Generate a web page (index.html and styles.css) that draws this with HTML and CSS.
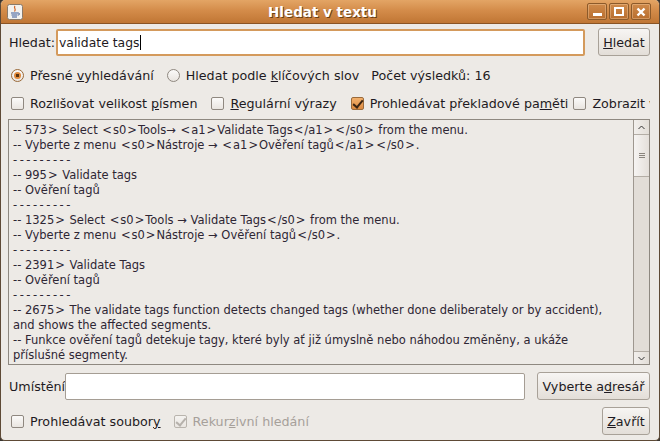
FILE: index.html
```html
<!DOCTYPE html>
<html>
<head>
<meta charset="utf-8">
<link rel="stylesheet" href="styles.css">
</head>
<body>
<div class="window">
  <div class="titlebar">
    <div class="appicon">
      <svg width="16" height="16" viewBox="0 0 16 16">
        <rect x="0.5" y="0.5" width="15" height="15" rx="2" fill="#f3f1ee" stroke="#8a7a6a"/>
        <path d="M8 2 C6 4 10 5 7.5 7.5" stroke="#d06020" stroke-width="1.2" fill="none"/>
        <path d="M4 9 h7 M4.5 11 h6 M5 13 h5" stroke="#3a5a9a" stroke-width="1.1"/>
        <path d="M11 9 c2 0 2 2 0 2" stroke="#3a5a9a" stroke-width="1" fill="none"/>
      </svg>
    </div>
    <div class="title">Hledat v textu</div>
    <div class="wbtns">
      <div class="wbtn"><span class="minbar"></span></div>
      <div class="wbtn"><span class="maxbox"></span></div>
      <div class="wbtn">
        <svg width="10" height="10" viewBox="0 0 10 10"><path d="M1.5 1.5 L8.5 8.5 M8.5 1.5 L1.5 8.5" stroke="#fff" stroke-width="2.4"/></svg>
      </div>
    </div>
  </div>
  <div class="content">
    <div class="row search">
      <span class="lbl">Hledat:</span>
      <div class="input focus">validate tags<span class="caret"></span></div>
      <button class="btn btn-search"><u>H</u>ledat</button>
    </div>
    <div class="row opts">
      <span class="radio on"></span><span class="opt">Přesné <u>v</u>yhledávání</span>
      <span class="radio r2"></span><span class="opt">Hledat podle <u>k</u>líčových slov</span>
      <span class="opt count">Počet výsledků: 16</span>
    </div>
    <div class="row opts opts2">
      <span class="check"></span><span class="opt">Rozlišovat velikost <u>p</u>ísmen</span>
      <span class="check c2"></span><span class="opt"><u>R</u>egulární výrazy</span>
      <span class="check on c3"></span><span class="opt">Prohledávat překladové pa<u>m</u>ěti</span>
      <span class="check c4"></span><span class="opt clip">Zobrazit v</span>
    </div>
    <div class="results">
      <div class="text">
        <div>-- 573<i>&gt;</i> Select <i>&lt;</i>s0<i>&gt;</i>Tools→ <i>&lt;</i>a1<i>&gt;</i>Validate Tags<i>&lt;</i>/a1<i>&gt;</i><i>&lt;</i>/s0<i>&gt;</i> from the menu.</div>
        <div>-- Vyberte z menu <i>&lt;</i>s0<i>&gt;</i>Nástroje → <i>&lt;</i>a1<i>&gt;</i>Ověření tagů<i>&lt;</i>/a1<i>&gt;</i><i>&lt;</i>/s0<i>&gt;</i>.</div>
        <div class="sep">---------</div>
        <div>-- 995<i>&gt;</i> Validate tags</div>
        <div>-- Ověření tagů</div>
        <div class="sep">---------</div>
        <div>-- 1325<i>&gt;</i> Select <i>&lt;</i>s0<i>&gt;</i>Tools → Validate Tags<i>&lt;</i>/s0<i>&gt;</i> from the menu.</div>
        <div>-- Vyberte z menu <i>&lt;</i>s0<i>&gt;</i>Nástroje → Ověření tagů<i>&lt;</i>/s0<i>&gt;</i>.</div>
        <div class="sep">---------</div>
        <div>-- 2391<i>&gt;</i> Validate Tags</div>
        <div>-- Ověření tagů</div>
        <div class="sep">---------</div>
        <div>-- 2675<i>&gt;</i> The validate tags function detects changed tags (whether done deliberately or by accident),</div>
        <div>and shows the affected segments.</div>
        <div>-- Funkce ověření tagů detekuje tagy, které byly ať již úmyslně nebo náhodou změněny, a ukáže</div>
        <div>příslušné segmenty.</div>
      </div>
      <div class="scrollbar">
        <div class="sbtn">
          <svg width="7" height="5" viewBox="0 0 7 5"><path d="M0.5 4 L3.5 1 L6.5 4" stroke="#333" stroke-width="1" fill="none"/></svg>
        </div>
        <div class="thumb"><span class="grip"></span></div>
        <div class="trough"></div>
        <div class="sbtn">
          <svg width="7" height="5" viewBox="0 0 7 5"><path d="M0.5 1 L3.5 4 L6.5 1" stroke="#333" stroke-width="1" fill="none"/></svg>
        </div>
      </div>
    </div>
    <div class="row loc">
      <span class="lbl">Umístění</span>
      <div class="input"></div>
      <button class="btn btn-dir">Vyberte a<u>d</u>resář</button>
    </div>
    <div class="row last">
      <span class="check"></span><span class="opt">Prohledávat soubor<u>y</u></span>
      <span class="check dis c5"></span><span class="opt disabled">Rekur<u>z</u>ivní hledání</span>
      <button class="btn btn-close"><u>Z</u>avřít</button>
    </div>
  </div>
</div>
</body>
</html>
```

FILE: styles.css
```css
* { box-sizing: border-box; }
html, body { margin: 0; padding: 0; background: #3a3530; }
body { width: 660px; height: 441px; overflow: hidden; }

.window {
  width: 660px;
  height: 441px;
  background: #edeae6;
  border: 1px solid #5e4a36;
  border-top: none;
  border-radius: 5px 5px 5px 5px;
  overflow: hidden;
  display: flex;
  flex-direction: column;
  font-family: "DejaVu Sans", sans-serif;
  font-size: 12.7px;
  color: #1e1a22;
}

.titlebar {
  height: 24px;
  flex: none;
  background: linear-gradient(#e3a565 0%, #d48c4a 45%, #c07634 100%);
  border-bottom: 1px solid #8a5424;
  display: flex;
  align-items: center;
  position: relative;
  padding: 0 8px 0 6px;
}
.appicon { width: 16px; height: 16px; display: flex; }
.title {
  flex: 1;
  text-align: center;
  color: #fff;
  font-weight: bold;
  font-size: 13.5px;
  text-shadow: 1px 1px 0 #6a3e14;
  padding-left: 35px;
}
.wbtns { display: flex; gap: 2px; }
.wbtn {
  width: 20px;
  height: 17px;
  border: 1px solid #8c5a2a;
  border-radius: 2px;
  background: linear-gradient(#cf8a4a, #b96e2e);
  box-shadow: inset 0 0 0 1px rgba(255,220,180,0.35);
  display: flex;
  align-items: center;
  justify-content: center;
}
.minbar { width: 9px; height: 3px; background: #fff; margin-top: 6px; }
.maxbox { width: 10px; height: 9px; border: 2px solid #fff; }

.content {
  flex: 1;
  display: flex;
  flex-direction: column;
  padding: 4px 9px 0 7px;
}

.row { display: flex; align-items: center; }
.lbl { white-space: nowrap; }

.input {
  flex: 1;
  height: 27px;
  background: #fff;
  border: 1px solid #a59d94;
  border-radius: 2px;
  display: flex;
  align-items: center;
  padding-left: 3px;
  font-size: 12.4px;
}
.input.focus { border: 2px solid #d49a5c; padding-left: 1px; }
.caret { width: 1px; height: 15px; background: #000; margin-left: 1px; }

.btn {
  font-family: "DejaVu Sans", sans-serif;
  font-size: 12.7px;
  color: #1e1a22;
  height: 28px;
  border: 1px solid #a8a198;
  border-radius: 3px;
  background: linear-gradient(#f7f5f3, #e3ded8);
  padding: 0 4px;
  white-space: nowrap;
}
.search .lbl { margin-left: 1px; width: 47px; }
.btn-search { margin-left: 13px; width: 52px; }

.opts { height: 28px; margin-top: 5px; }
.opts2 { margin-top: 0; white-space: nowrap; overflow: hidden; }
.opt { white-space: nowrap; }
.radio, .check {
  flex: none;
  width: 13px;
  height: 13px;
  border: 1px solid #8f8880;
  background: linear-gradient(#fbfaf9, #e9e5e0);
  margin-left: 3px;
  margin-right: 6px;
}
.radio { border-radius: 50%; position: relative; }
.radio.on { border-color: #9a6a3a; }
.radio.on::after {
  content: "";
  position: absolute;
  left: 2px; top: 2px;
  width: 7px; height: 7px;
  border-radius: 50%;
  background: radial-gradient(circle, #5a3210 0 1.5px, #e08a3c 2px);
}
.r2 { margin-left: 13px; }
.count { margin-left: 12px; }
.check { border-radius: 2px; position: relative; }
.check.on { border-color: #9a6a3a; background: linear-gradient(#f2b06c, #dc8a40); }
.check.on::after {
  content: "";
  position: absolute;
  left: 3px; top: 0px;
  width: 4px; height: 8px;
  border: solid #3a2412;
  border-width: 0 2px 2px 0;
  transform: rotate(40deg);
}
.c2 { margin-left: 14px; }
.c3 { margin-left: 14px; }
.c4 { margin-left: 5px; }
.opts2 .opt.clip { overflow: hidden; }

.results {
  height: 246px;
  margin-top: 2px;
  border: 1px solid #8e8880;
  display: flex;
  background: #edeae6;
}
.text {
  flex: 1;
  padding: 3px 0 0 4px;
  font-family: "DejaVu Sans", sans-serif;
  font-size: 11.5px;
  line-height: 15px;
  color: #2e2634;
  white-space: nowrap;
  overflow: hidden;
}
.text i { font-style: normal; padding: 0 1px; }
.sep { letter-spacing: 2.5px; }
.scrollbar {
  width: 16px;
  display: flex;
  flex-direction: column;
  border-left: 1px solid #9e978f;
  background: #e2ddd7;
}
.sbtn {
  height: 15px;
  display: flex;
  align-items: center;
  justify-content: center;
  background: linear-gradient(90deg, #f2efec, #e2ddd7);
  border-bottom: 1px solid #b3ada5;
}
.sbtn:last-child { border-bottom: none; border-top: 1px solid #b3ada5; height: 13px; }
.thumb {
  height: 42px;
  background: linear-gradient(90deg, #f6f4f2, #e4dfda);
  border-bottom: 1px solid #b3ada5;
  display: flex;
  align-items: center;
  justify-content: center;
}
.grip {
  width: 6px;
  height: 5px;
  border-top: 1px solid #8a847d;
  border-bottom: 1px solid #8a847d;
  position: relative;
}
.grip::after {
  content: "";
  position: absolute;
  left: 0; right: 0; top: 1px;
  border-top: 1px solid #8a847d;
}
.trough { flex: 1; }

.loc { margin-top: 7px; height: 28px; }
.loc .lbl { margin-left: 1px; }
.loc .input { height: 27px; }
.btn-dir { margin-left: 12px; width: 113px; }

.last { margin-top: 7px; height: 28px; }
.c5 { margin-left: 13px; opacity: 0.55; }
.check.dis::after {
  content: "";
  position: absolute;
  left: 3px; top: 0px;
  width: 4px; height: 8px;
  border: solid #8a847d;
  border-width: 0 2px 2px 0;
  transform: rotate(40deg);
}
.disabled { color: #a6a09a; }
.btn-close { margin-left: auto; width: 48px; }
```
